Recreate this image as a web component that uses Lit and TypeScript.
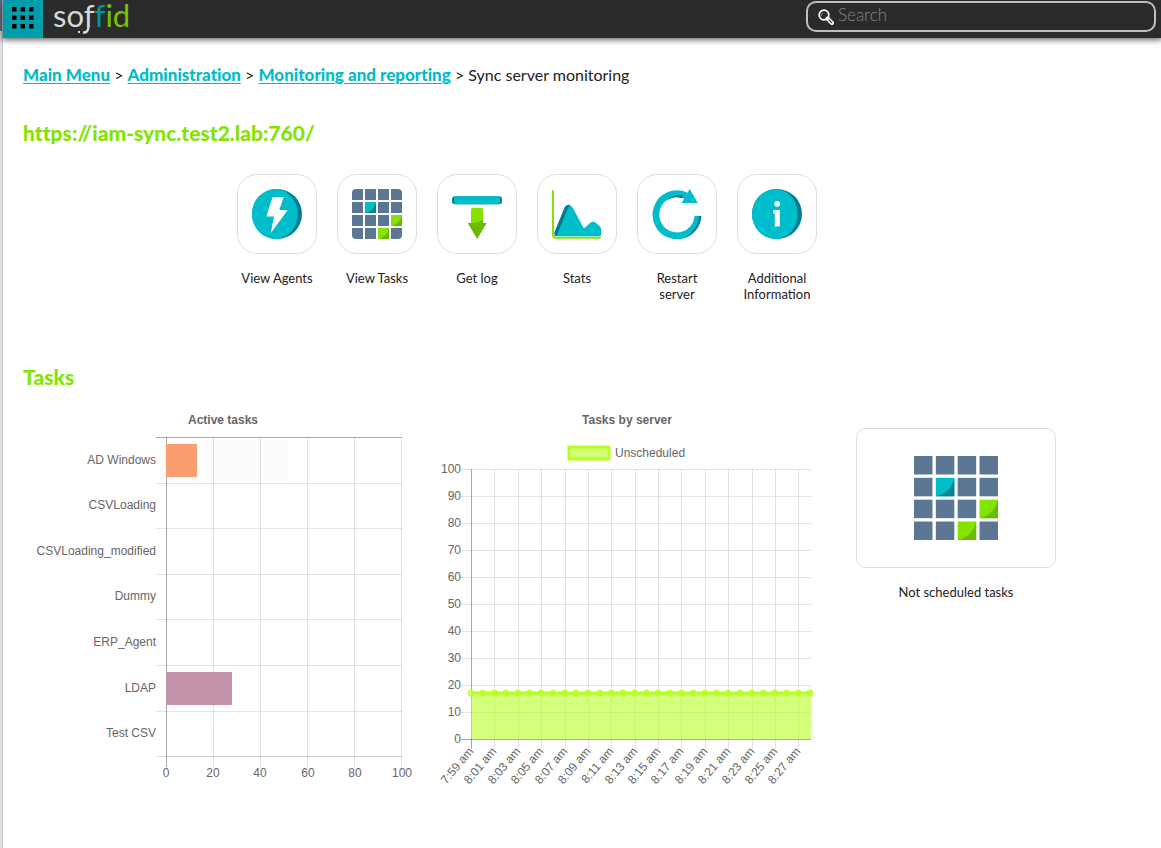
import { LitElement, html, svg, css } from "lit";
import { customElement } from "lit/decorators.js";

const SLATE = "#5b7794";
const TEAL = "#00bdcb";
const DEEP = "#007d92";
const LIME = "#84e400";
const MOSS = "#6cba00";

/* A disc with a darker rim on its right side. */
const disc = svg`
  <circle cx="25" cy="25" r="25" fill=${DEEP} />
  <path d="M23.5 0A22.2 25 0 0 1 23.5 50A23.5 25 0 0 1 23.5 0Z" fill=${TEAL} />
`;

const gridCells = () => {
  const cells = [];
  for (let row = 0; row < 4; row++) {
    for (let col = 0; col < 4; col++) {
      const x = col * 13;
      const y = row * 13;
      const teal = row === 1 && col === 1;
      const lime = (row === 2 && col === 3) || (row === 3 && col === 2);
      cells.push(svg`<rect x=${x} y=${y} width="11" height="11" fill=${teal ? TEAL : lime ? LIME : SLATE} />`);
      if (teal || lime) {
        cells.push(svg`<path d="M${x + 11} ${y}V${y + 11}H${x}Q${x + 9} ${y + 9} ${x + 11} ${y}Z" fill=${teal ? "#008591" : MOSS} />`);
      }
    }
  }
  return cells;
};

const icons = {
  agents: svg`${disc}<path d="M20.5 8H31.7L27.3 21H35.7L18.7 44.2L22 27.5H14.3Z" fill="#fff" />`,
  tasks: svg`
    <clipPath id="soft"><rect width="50" height="50" rx="4" /></clipPath>
    <g clip-path="url(#soft)">${gridCells()}</g>`,
  log: svg`
    <rect x="0" y="7.3" width="50" height="8" rx="3" fill=${DEEP} />
    <rect x="2" y="7.3" width="46" height="8" rx="2" fill=${TEAL} />
    <path d="M19 34V20.5Q19 18.7 21 18.7H29Q31 18.7 31 20.5V34Z" fill=${LIME} />
    <path d="M31 30.5V34H34.7L25.2 50L15.7 34H22Q28 33 31 30.5Z" fill=${MOSS} />`,
  stats: svg`
    <path d="M1 2V45.5Q1 48.7 4 48.7H48" fill="none" stroke=${LIME} stroke-width="2" stroke-linecap="round" />
    <path d="M2.2 44L12.5 18.5Q14.5 14.8 18 16L19 30L5 47H3Z" fill=${DEEP} />
    <path d="M4.5 47.3L16 19Q18 14.500 21 19L31 38Q31.6 39.2 33 38.7L38 34Q41 31.5 44 34L48 37.5Q49 38.5 49 40V46Q49 47.3 47.5 47.3Z" fill=${TEAL} />`,
  restart: svg`
    <path d="M45.900 27A21 21 0 1 1 34 6.800" fill="none" stroke=${TEAL} stroke-width="6.800" />
    <path d="M49.300 27A24.400 24.400 0 0 1 32 49Q45 42 47 27Z" fill=${DEEP} />
    <path d="M14 11.700Q21 5 31 6L30 9Q21 6.500 14 11.700Z" fill=${DEEP} />
    <path d="M37.700 0L45.800 14H29.500Z" fill=${TEAL} />`,
  info: svg`${disc}
    <circle cx="25.2" cy="14.8" r="2.9" fill="#fff" />
    <path d="M21 21H27.8V37.5H22.8V24.2H21Z" fill="#fff" />`,
};

const actions = [
  { icon: icons.agents, label: "View Agents" },
  { icon: icons.tasks, label: "View Tasks" },
  { icon: icons.log, label: "Get log" },
  { icon: icons.stats, label: "Stats" },
  { icon: icons.restart, label: "Restart server" },
  { icon: icons.info, label: "Additional Information" },
];

const agents = [
  { name: "AD Windows", tasks: 13, color: "#fa9e72" },
  { name: "CSVLoading", tasks: 0, color: "" },
  { name: "CSVLoading_modified", tasks: 0, color: "" },
  { name: "Dummy", tasks: 0, color: "" },
  { name: "ERP_Agent", tasks: 0, color: "" },
  { name: "LDAP", tasks: 28, color: "#c594aa" },
  { name: "Test CSV", tasks: 0, color: "" },
];

const minutes = Array.from({ length: 30 }, (_, i) => {
  const m = 59 + i;
  return `${7 + Math.floor(m / 60)}:${String(m % 60).padStart(2, "0")} am`;
});

@customElement("tasks-bar-chart")
export class TasksBarChart extends LitElement {
  static styles = css`
    :host { display: block; }
    svg { display: block; width: 100%; height: auto; font: 12px "Liberation Sans", Arial, sans-serif; fill: #666; }
    .title { font-weight: bold; }
    .grid { fill: rgba(0, 0, 0, 0.11); }
    .axis { fill: rgba(0, 0, 0, 0.25); }
    .soft { fill: rgba(0, 0, 0, 0.1); }
    .hint { fill: rgba(0, 0, 0, 0.01); }
  `;

  render() {
    const left = 143;
    const top = 37;
    const band = 45.6;
    const rowY = (i: number) => Math.floor(top + 0.45 + i * band);
    const colX = (v: number) => Math.round(left + (v * 235) / 100);
    return html`
      <svg viewBox="0 0 400 400" role="img" aria-label="Active tasks">
        <text class="title" x="200" y="24" text-anchor="middle">Active tasks</text>
        ${[0, 20, 40, 60, 80, 100].map(
          (v) => svg`
            <rect class="grid" x=${colX(v)} y=${top} width="1" height="330" />
            <text x=${left + Math.round(v * 2.36)} y="377" text-anchor="middle">${v}</text>`
        )}
        ${[0, 1, 2, 3, 4, 5, 6, 7].map((i) => svg`<rect class="grid" x="133" y=${rowY(i)} width="246" height="1" />`)}
        <rect class="axis" x=${left} y=${top} width="1" height="330" />
        <rect class="axis" x="133" y=${top} width="246" height="1" />
        <rect class="soft" x=${left} y=${rowY(7)} width="236" height="1" />
        ${agents.map(
          (a, i) => svg`
            <text x="133" y=${Math.floor(64 + i * band)} text-anchor="end">${a.name}</text>
            ${a.tasks ? svg`<rect x=${left} y=${rowY(i) + 7} width=${colX(a.tasks) - left} height="33" fill=${a.color} />` : null}`
        )}
        <rect class="hint" x="181" y="39" width="85" height="42" rx="6" />
      </svg>`;
  }
}

@customElement("tasks-line-chart")
export class TasksLineChart extends LitElement {
  static styles = css`
    :host { display: block; }
    svg { display: block; width: 100%; height: auto; font: 12px "Liberation Sans", Arial, sans-serif; fill: #666; }
    .title { font-weight: bold; }
    .grid { fill: rgba(0, 0, 0, 0.11); }
    .axis { fill: rgba(0, 0, 0, 0.25); }
    .area { fill: #b6ff21; fill-opacity: 0.6; }
    .line { fill: none; stroke: #b6ff21; stroke-width: 3; }
    .dot { fill: #b6ff21; fill-opacity: 0.6; stroke: #b6ff21; }
    .key { fill: #d3ff7a; stroke: #b6ff21; stroke-width: 3; }
  `;

  render() {
    const x0 = 44;
    const y0 = 339;
    const px = (i: number) => x0 + (i * 339) / 29;
    const value = 17;
    const vy = y0 - Math.round(value * 2.7);
    return html`
      <svg viewBox="0 0 400 400" role="img" aria-label="Tasks by server">
        ${Array.from({ length: 11 }, (_, i) => i * 10).map(
          (v) => svg`
            <rect class="grid" x="34" y=${y0 - v * 2.7} width="350" height="1" />
            <text x="34" y=${y0 - Math.round(v * 2.7) + 4} text-anchor="end">${v}</text>`
        )}
        ${minutes.map((label, i) =>
          i % 2
            ? null
            : svg`
              <rect class="grid" x=${Math.round(px(i))} y="69" width="1" height="280" />
              <text transform="translate(${Math.round(px(i))} 349) rotate(-50)" text-anchor="end" dy="4">${label}</text>`
        )}
        <rect class="axis" x=${x0} y="69" width="1" height="280" />
        <rect class="axis" x="34" y=${y0} width="350" height="1" />
        <rect class="area" x=${x0} y=${vy} width="340" height=${y0 - vy} />
        <path class="line" d="M${x0} ${vy}H384" />
        ${minutes.map((_, i) => svg`<circle class="dot" cx=${px(i)} cy=${vy} r="3" />`)}
        <text class="title" x="200" y="24" text-anchor="middle">Tasks by server</text>
        <rect class="key" x="142" y="47" width="40" height="12" />
        <text x="188" y="57">Unscheduled</text>
      </svg>`;
  }
}

@customElement("app-root")
export class AppRoot extends LitElement {
  static styles = css`
    * { box-sizing: border-box; }
    :host {
      display: flex;
      min-height: 100vh;
      background: #fff;
      color: #222;
      font: 16px/20px Lato, "Open Sans", sans-serif;
      font-variant-ligatures: none;
    }
    .edge {
      flex: none;
      width: 3px;
      background: linear-gradient(#5b7794 31px, #dde1e5 31px);
      border-right: 1px solid #c8cbce;
    }
    .page { flex: 1; min-width: 0; }
    header {
      display: flex;
      align-items: flex-start;
      height: 38px;
      background: #2b2b2b;
      box-shadow: 0 1px 6px 1px rgba(0, 0, 0, 0.6);
    }
    .menu {
      width: 40px;
      height: 38px;
      padding: 0;
      border: 0;
      background: #009daa;
    }
    .menu svg { display: block; }
    .logo { display: block; margin-left: 8px; overflow: visible; }
    .logo text { font: 31px Lato, sans-serif; font-variant-ligatures: none; }
    .search {
      display: flex;
      align-items: center;
      width: 350px;
      height: 31px;
      margin: 1px 5px 0 auto;
      padding: 0 10px;
      border: 2px solid #bfbfbf;
      border-radius: 10px;
    }
    .search svg { flex: none; }
    .search input {
      flex: 1;
      min-width: 0;
      height: 24px;
      padding: 0 0 5px;
      margin-left: 4px;
      border: 0;
      outline: 0;
      background: none;
      color: #fff;
      font: 300 17px/20px Lato, sans-serif;
    }
    .search input::placeholder { color: #858585; opacity: 1; }
    main { padding: 27px 20px 40px; }
    .crumbs a { color: #00bcc8; font-size: 17px; font-weight: 900; text-underline-offset: 2px; }
    h1, h2 { margin: 0; color: #84e400; font-size: 21px; line-height: 24px; font-weight: 900; }
    h1 { margin-top: 36px; }
    .actions {
      display: flex;
      flex-wrap: wrap;
      justify-content: center;
      gap: 20px;
      max-width: 1008px;
      min-height: 136px;
      margin-top: 29px;
    }
    .action {
      display: flex;
      flex-direction: column;
      align-items: center;
      gap: 16px;
      width: 80px;
      padding: 0;
      border: 0;
      background: none;
      color: #222;
      font: 13px/16px Lato, sans-serif;
    }
    .label { max-width: 76px; }
    .tile {
      display: grid;
      place-items: center;
      width: 80px;
      height: 80px;
      border: 1px solid #dedede;
      border-radius: 20px;
    }
    h2 { margin-top: 55px; }
    .charts { display: flex; flex-wrap: wrap; align-items: flex-start; gap: 4px; margin-top: 11px; }
    .chart { flex: 0 1 400px; min-width: 280px; }
    .summary {
      display: flex;
      flex-direction: column;
      align-items: center;
      gap: 16px;
      width: 200px;
      margin: 28px 0 0 25px;
      padding: 0;
      border: 0;
      background: none;
      color: #222;
      font: 13px/16px Lato, sans-serif;
    }
    .card {
      display: grid;
      place-items: center;
      width: 200px;
      height: 140px;
      border: 1px solid #dedede;
      border-radius: 10px;
    }
  `;

  render() {
    return html`
      <div class="edge"></div>
      <div class="page">
        <header>
          <button class="menu" aria-label="Menu">
            <svg width="40" height="38" viewBox="0 0 40 38">
              ${[7, 15.5, 24].map((y) => [9, 17.5, 26].map((x) => svg`<rect x=${x} y=${y} width="4.5" height="4.5" />`))}
            </svg>
          </button>
          <svg class="logo" width="90" height="38" viewBox="0 0 90 38" role="img" aria-label="soffid">
            <text x="2" y="27" fill="#d8d8d8">so<tspan>f</tspan><tspan fill="#0097a3">f</tspan><tspan fill="#77c400">id</tspan></text>
            <path d="M37.5 26Q37.5 33 32 32.5" fill="none" stroke="#d8d8d8" stroke-width="2.5" />
            <rect x="27" y="31" width="2" height="2" fill="#d8d8d8" />
          </svg>
          <label class="search">
            <svg width="16" height="16" viewBox="0 0 16 16" aria-hidden="true">
              <circle cx="6" cy="6" r="4.8" fill="none" stroke="#fff" stroke-width="1.8" />
              <path d="M3.5 6.5A2.6 2.6 0 0 1 5 3.6" fill="none" stroke="#bbb" stroke-width="0.8" />
              <path d="M9.5 9.5L14 14" stroke="#fff" stroke-width="4" stroke-linecap="round" />
              <path d="M11 11L13.7 13.7" stroke="#2b2b2b" stroke-width="1.2" stroke-linecap="round" />
            </svg>
            <input type="text" placeholder="Search" aria-label="Search" />
          </label>
        </header>
        <main>
          <nav class="crumbs">
            <a href="#">Main Menu</a> &gt; <a href="#">Administration</a> &gt;
            <a href="#">Monitoring and reporting</a> &gt; <span>Sync server monitoring</span>
          </nav>
          <h1>https://iam-sync.test2.lab:760/</h1>
          <div class="actions">
            ${actions.map(
              (a) => html`
                <button class="action">
                  <span class="tile"><svg width="50" height="50" viewBox="0 0 50 50" aria-hidden="true">${a.icon}</svg></span>
                  <span class="label">${a.label}</span>
                </button>`
            )}
          </div>
          <h2>Tasks</h2>
          <section class="charts">
            <tasks-bar-chart class="chart"></tasks-bar-chart>
            <tasks-line-chart class="chart"></tasks-line-chart>
            <button class="summary">
              <span class="card"><svg width="84" height="84" viewBox="0 0 50 50" aria-hidden="true">${gridCells()}</svg></span>
              <span>Not scheduled tasks</span>
            </button>
          </section>
        </main>
      </div>`;
  }
}
